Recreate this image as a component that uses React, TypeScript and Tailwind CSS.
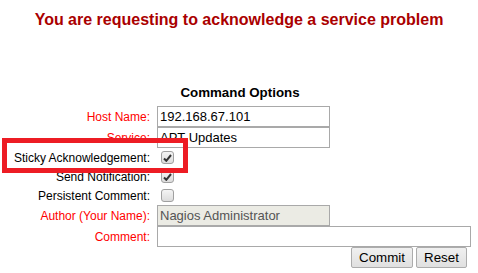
import React from 'react';

const font = { fontFamily: '"Liberation Sans", Arial, sans-serif' };

const Check = ({ checked }: { checked: boolean }) => (
  <span className="mx-[4px] my-[3px] flex h-[13px] w-[13px] items-center justify-center rounded-[3px] border border-[#a0a0a0] bg-gradient-to-b from-[#f4f4f4] to-[#dcdcdc]">
    {checked && (
      <svg width="9" height="8" viewBox="0 0 9 8">
        <path d="M1 4.5 L3.3 6.8 L8 1" fill="none" stroke="#333" strokeWidth="2" />
      </svg>
    )}
  </span>
);

const Label = ({ text, required }: { text: string; required?: boolean }) => (
  <div
    className={`w-[150px] shrink-0 text-right text-[12px] ${
      required ? 'text-[#ff0000]' : 'text-black'
    }`}
  >
    {text}
  </div>
);

const App = () => {
  return (
    <div className="relative h-[273px] w-[478px] bg-white" style={font}>
      {/* Header */}
      <div className="pt-[11px] text-center text-[16px] font-bold leading-[18px] text-[#aa0000]">
        You are requesting to acknowledge a service problem
      </div>

      <div className="mt-[56px] pl-[2px] text-center text-[13.33px] font-bold leading-[15px] text-black">
        Command Options
      </div>

      {/* Options */}
      <div className="mt-[6px] flex flex-col">
        <div className="flex h-[21px] items-center gap-[7px]">
          <Label text="Host Name:" required />
          <div className="flex h-[21px] w-[173px] items-center border border-[#a9a9a9] pl-[2px] text-[13px]">
            192.168.67.101
          </div>
        </div>
        <div className="flex h-[21px] items-center gap-[7px]">
          <Label text="Service:" required />
          <div className="flex h-[21px] w-[173px] items-center border border-[#a9a9a9] pl-[2px] text-[13px]">
            APT Updates
          </div>
        </div>
        <div className="flex h-[19px] items-center gap-[7px]">
          <Label text="Sticky Acknowledgement:" />
          <Check checked />
        </div>
        <div className="flex h-[19px] items-center gap-[7px]">
          <Label text="Send Notification:" />
          <Check checked />
        </div>
        <div className="flex h-[19px] items-center gap-[7px]">
          <Label text="Persistent Comment:" />
          <Check checked={false} />
        </div>
        <div className="flex h-[21px] items-center gap-[7px]">
          <Label text="Author (Your Name):" required />
          <div className="flex h-[21px] w-[173px] items-center border border-[#a9a9a9] bg-[#ebebe4] pl-[2px] text-[13px] text-[#545454]">
            Nagios Administrator
          </div>
        </div>
        <div className="flex h-[21px] items-center gap-[7px]">
          <Label text="Comment:" required />
          <div className="h-[21px] w-[314px] border border-[#a9a9a9]" />
        </div>
        <div className="flex h-[21px] items-center gap-[3px] pl-[351px]">
          <button className="h-[21px] w-[62px] rounded-[2px] border border-[#acacac] bg-gradient-to-b from-[#f0f0f0] to-[#e0e0e0] text-[13.33px] leading-none text-black">
            Commit
          </button>
          <button className="h-[21px] w-[51px] rounded-[2px] border border-[#acacac] bg-gradient-to-b from-[#f0f0f0] to-[#e0e0e0] text-[13.33px] leading-none text-black">
            Reset
          </button>
        </div>
      </div>

      {/* Highlight annotation */}
      <div className="absolute left-[2px] top-[138px] h-[35px] w-[186px] border-[5px] border-[#ed1c24]" />
    </div>
  );
};

export default App;
